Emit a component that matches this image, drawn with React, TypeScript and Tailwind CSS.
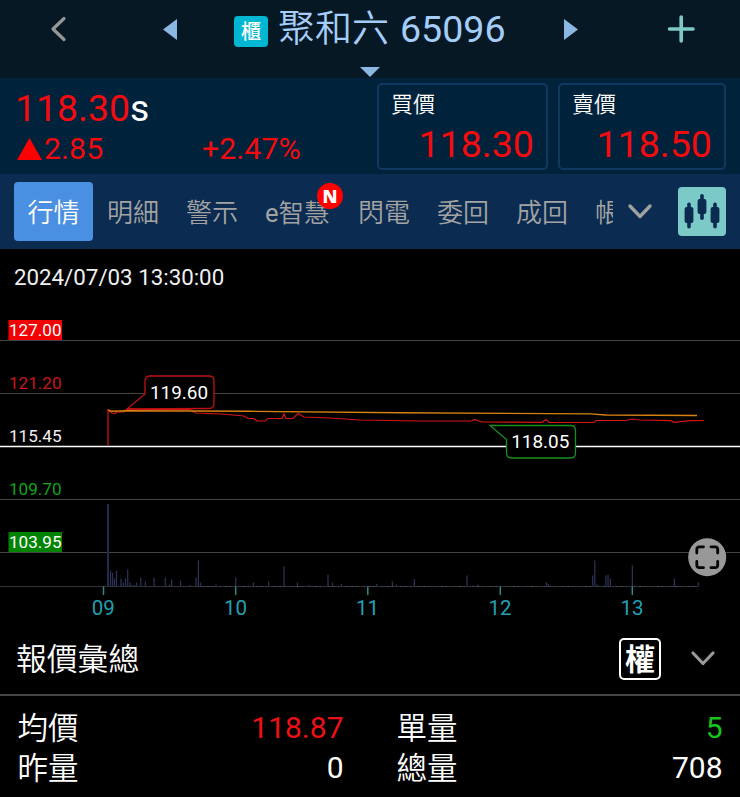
import React from "react";

const volumes: [number, number][] = [
  [110.5, 16], [112.5, 13.5], [114.5, 8], [116.5, 16], [121, 8], [123.3, 4], [125.5, 8], [127.7, 17],
  [130, 4], [132, 1.5], [134.3, 1.5], [136.5, 4], [140.8, 9], [145.3, 5], [154, 9], [165.3, 9],
  [169.5, 2], [171.7, 7], [180.5, 6], [189.7, 1.5], [196, 9], [198.4, 26], [200.5, 4], [216, 2],
  [235.7, 9], [253.4, 4], [268.7, 5], [284, 20], [297.4, 4], [308.4, 1.5], [328, 12], [332.5, 4],
  [341.4, 2.5], [376.7, 2.5], [392.4, 5], [396.4, 2], [414.4, 7.5], [467, 11], [473.7, 1], [478, 2],
  [546.4, 4.5], [548.4, 2.5], [592.7, 11], [594.8, 26], [597, 2], [605.8, 11], [608, 12],
  [610.4, 8], [632.4, 21], [674.4, 8], [698.4, 4],
];

const pricePoints =
  "108,446 108,410 110,411.5 112,413 115,413.5 117,412 124,412 128,409 150,409.5 190,409.5 196,413 222,414 244,416 248,418.5 254,418.5 257,421 265,421 268,418.5 282,418.5 284,414 286,418.5 293,418.5 298,413.5 304,417 330,418 360,420 420,421 472,421 474,419.5 482,422 542,422.3 546,419.5 549,422.3 594,422.5 596,420.5 626,420.5 632,419 640,420 671,420.7 674,422.3 690,420.7 704,420.5";

const averagePoints =
  "108,410 112,411.3 127,410.8 250,411.3 400,412.7 590,413.9 606,415 697,415.5";

const hours: [string, number][] = [["09", 103.2], ["10", 235.4], ["11", 367.5], ["12", 500], ["13", 632]];

function Header() {
  return (
    <header className="relative flex h-[78px] items-start bg-[#061824]">
      <svg className="ml-[48px] mt-[14px] shrink-0" width="20" height="30" fill="none" stroke="#969696" strokeWidth="3.2" strokeLinecap="round" strokeLinejoin="round">
        <path d="M16 4.5 5 15 16 25.5" />
      </svg>
      <svg className="ml-[95px] mt-[19px] shrink-0" width="14" height="21" fill="#8bb8e3">
        <path d="M14 0V21L0 10.5Z" />
      </svg>
      <span className="ml-[57px] mt-[16px] flex h-[31px] w-[34px] shrink-0 items-center justify-center rounded-[4px] bg-[#00b7d3] text-[20px] leading-none font-medium text-white">櫃</span>
      <h1 className="ml-[10px] mt-[4px] flex w-[229px] shrink-0 whitespace-pre text-[37px] leading-[50px] text-[#a4cdfa]">
        <span className="mt-px font-[350]">聚和六</span>
        <span className="ml-[11px] text-[37.6px] font-normal">65096</span>
      </h1>
      <svg className="ml-[57px] mt-[19px] shrink-0" width="14" height="21" fill="#8bb8e3">
        <path d="M0 0V21L14 10.5Z" />
      </svg>
      <svg className="ml-[87px] mt-[14px] shrink-0" width="32" height="32" stroke="#7bcac6" strokeWidth="3.6" strokeLinecap="round">
        <path d="M4.5 15H28M16.2 3V27" />
      </svg>
      <svg className="absolute left-[360px] top-[67px]" width="20" height="10" fill="#8bb8e3">
        <path d="M0 0H20L10 10Z" />
      </svg>
    </header>
  );
}

function PriceBox({ label, value, className }: { label: string; value: string; className: string }) {
  return (
    <div className={`mt-[5px] h-[87px] shrink-0 rounded-[5px] border-2 border-[#103861] pl-[12px] ${className}`}>
      <div className="mt-[4px] text-[22px] leading-[32px] font-[350] text-white">{label}</div>
      <div className="text-right text-[37.6px] leading-[47px] text-[#f40b0f]">{value}</div>
    </div>
  );
}

function Quote() {
  return (
    <section className="flex h-[96px] bg-[#00223b]">
      <div className="w-[377px] shrink-0 pl-[15px] pt-[8px] text-[#f40b0f]">
        <div className="text-[37.4px] leading-[44px]">
          118.30<span className="text-white">s</span>
        </div>
        <div className="flex items-center text-[30.4px] leading-[37px]">
          <svg className="mr-[2px] ml-[2px]" width="25" height="22" fill="#ff0000">
            <path d="M12.5 0 25 22H0Z" />
          </svg>
          <span className="w-[158px]">2.85</span>
          <span>+2.47%</span>
        </div>
      </div>
      <PriceBox label="買價" value="118.30" className="w-[171px] pr-[12px]" />
      <PriceBox label="賣價" value="118.50" className="ml-[10px] w-[168px] pr-[12px]" />
    </section>
  );
}

function Tabs() {
  return (
    <nav className="flex h-[75px] items-start bg-[#0b2b50] text-[26px] leading-[62px] font-[350] text-[#a3a3a3]">
      <span className="ml-[14px] mt-[8px] h-[59px] w-[79px] shrink-0 rounded-[4px] bg-[#4a90e2] text-center text-white">行情</span>
      <div className="ml-[14px] mt-[8px] flex w-[506px] shrink-0 gap-[27px] overflow-hidden whitespace-nowrap">
        <span className="shrink-0">明細</span>
        <span className="shrink-0">警示</span>
        <span className="relative w-[66px] shrink-0 text-[25.5px]">
          <span className="font-normal">e</span>智慧
          <b className="absolute left-[52px] top-[1px] flex h-[26px] w-[26px] items-center justify-center rounded-full bg-[#ff0000] font-['Open_Sans'] text-[18px] leading-none font-extrabold text-white">N</b>
        </span>
        <span className="shrink-0">閃電</span>
        <span className="shrink-0">委回</span>
        <span className="shrink-0">成回</span>
        <span className="shrink-0">帳務</span>
      </div>
      <svg className="ml-[13px] mt-[27px] shrink-0" width="28" height="24" fill="none" stroke="#a0a0a0" strokeWidth="3.4" strokeLinecap="round" strokeLinejoin="round">
        <path d="M4 5 14 15.5 24 5" />
      </svg>
      <svg className="ml-[24px] mt-[13px] shrink-0" width="48" height="49">
        <rect width="48" height="49" rx="4" fill="#7bcac8" />
        <g fill="#0b2b50">
          <rect x="6.6" y="20" width="8.8" height="16" rx="2" />
          <rect x="9.2" y="15.5" width="3.6" height="26" rx="1.8" />
          <rect x="19.6" y="12" width="8.8" height="15" rx="2" />
          <rect x="22.2" y="7" width="3.6" height="26" rx="1.8" />
          <rect x="32.6" y="20" width="8.8" height="16" rx="2" />
          <rect x="35.2" y="15.5" width="3.6" height="26" rx="1.8" />
        </g>
      </svg>
    </nav>
  );
}

function Chart() {
  return (
    <svg className="block" width="740" height="381" viewBox="0 249 740 381" fill="none">
      <text x="14" y="284.5" fontSize="22.3" fill="#f0f0f0">2024/07/03 13:30:00</text>
      <path d="M0 340.5H740M0 393.5H740M0 499.5H740M0 552.5H740" stroke="#424344" />
      <path d="M0 586.5H698" stroke="#303438" />
      <path d="M0 446.5H740" stroke="#fff" strokeWidth="1.3" />
      <path d="M8.5 320H62V340H8.5Z" fill="#f40000" />
      <path d="M8.5 532H62V552H8.5Z" fill="#008400" />
      <g fontSize="17.1">
        <text x="9" y="336" fill="#fff">127.00</text>
        <text x="9" y="389" fill="#c81717">121.20</text>
        <text x="9" y="442" fill="#f0f0f0">115.45</text>
        <text x="9" y="495" fill="#12a418">109.70</text>
        <text x="9" y="548" fill="#fff">103.95</text>
      </g>
      <path d="M108 504V586.5" stroke="#242a50" strokeWidth="2" />
      {volumes.map(([x, h]) => (
        <path key={x} d={`M${x} ${586.5 - h}V586.5`} stroke="#2c3052" strokeWidth="1.3" />
      ))}
      <path d="M202 586.5H698" stroke="#4b4f68" strokeWidth="1" strokeDasharray="1 4 2 3 1 7" />
      <path d="M127 409 145 394V381Q145 376 150 376H209Q214 376 214 381V403Q214 408.5 209 408.5Z" fill="#000" stroke="#bd1212" strokeWidth="1.3" />
      <polyline points={pricePoints} stroke="#d51414" strokeWidth="1.2" />
      <polyline points={averagePoints} stroke="#d58213" strokeWidth="1.4" />
      <path d="M490 425.5H570.5Q575.5 425.5 575.5 430.5V453Q575.5 458 570.5 458H511.5Q506.5 458 506.5 453V439.5Z" fill="#000" stroke="#16901d" strokeWidth="1.3" />
      <text x="150" y="398.8" fontSize="18.9" fill="#fff">119.60</text>
      <text x="511.2" y="448.3" fontSize="18.9" fill="#fff">118.05</text>
      {hours.map(([label, x]) => (
        <g key={label}>
          <path d={`M${x + 0.3} 586.5V595`} stroke="#268c88" strokeWidth="1.5" />
          <text x={x} y="614.7" fontSize="20.5" textAnchor="middle" fill="#20a0b5">{label}</text>
        </g>
      ))}
      <circle cx="707.2" cy="557.2" r="19" fill="#989898" />
      <path d="M696.8 553V549.5Q696.8 546.8 699.5 546.8H703.5M711 546.8H715Q717.7 546.8 717.7 549.5V553M717.7 561.5V565Q717.7 567.7 715 567.7H711M703.5 567.7H699.5Q696.8 567.7 696.8 565V561.5" stroke="#050505" strokeWidth="2.8" strokeLinecap="round" />
    </svg>
  );
}

function Stat({ label, value, className }: { label: string; value: string; className: string }) {
  return (
    <div className="flex justify-between">
      <span className="pt-px text-[30.5px] font-[350]">{label}</span>
      <span className={className}>{value}</span>
    </div>
  );
}

function Summary() {
  return (
    <section>
      <div className="flex h-[66px] items-start border-b-2 border-[#454545]">
        <h2 className="ml-[16px] mt-[9px] flex-1 text-[30.8px] leading-[42px] font-[350]">報價彙總</h2>
        <span className="mt-[8px] flex h-[42px] w-[42px] items-center justify-center rounded-[5px] border-2 border-white pt-px text-[30px] leading-none font-bold">權</span>
        <svg className="ml-[28px] mr-[23px] mt-[17px]" width="28" height="24" fill="none" stroke="#999" strokeWidth="3.2" strokeLinecap="round" strokeLinejoin="round">
          <path d="M4 6 14 16.5 24 6" />
        </svg>
      </div>
      <div className="grid auto-rows-[40px] grid-cols-[326px_326px] gap-x-[53px] pt-[12px] pl-[17.5px] text-[30px] leading-[40px]">
        <Stat label="均價" value="118.87" className="text-[#ed1115]" />
        <Stat label="單量" value="5" className="text-[#16c41b]" />
        <Stat label="昨量" value="0" className="text-white" />
        <Stat label="總量" value="708" className="text-white" />
      </div>
    </section>
  );
}

export default function App() {
  return (
    <main className="h-[797px] w-[740px] overflow-hidden bg-black font-[Roboto,'Noto_Sans_CJK_TC',sans-serif] text-white">
      <Header />
      <Quote />
      <Tabs />
      <Chart />
      <Summary />
    </main>
  );
}
